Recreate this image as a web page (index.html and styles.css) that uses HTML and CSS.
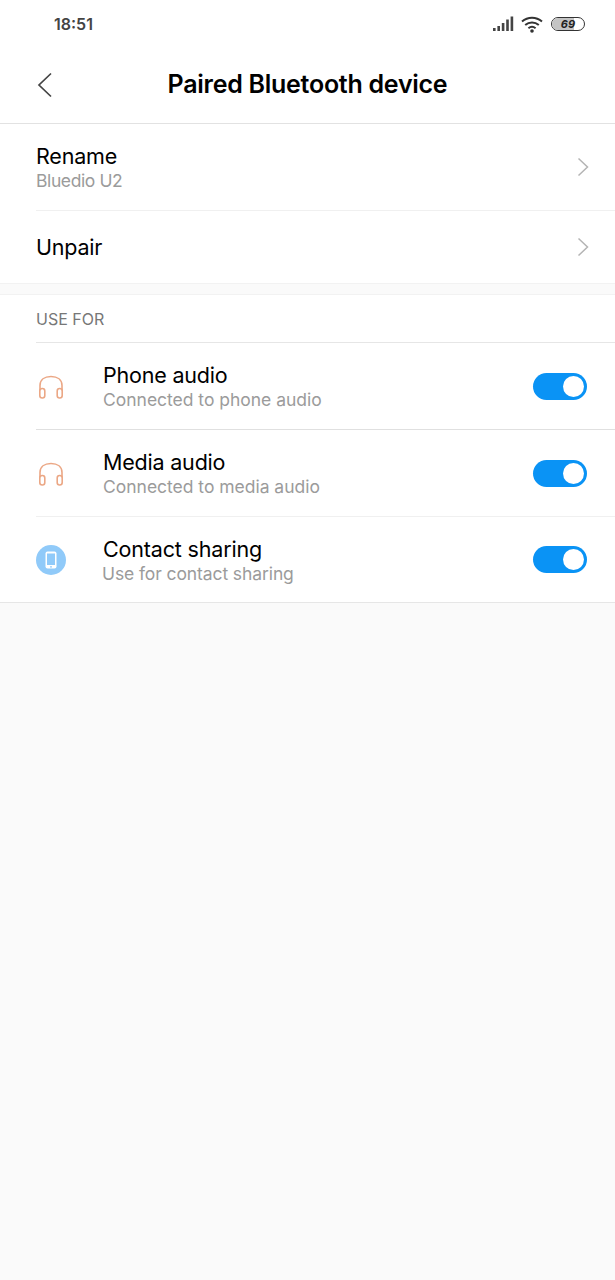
FILE: index.html
```html
<!DOCTYPE html>
<html lang="en">
<head>
<meta charset="utf-8">
<title>Paired Bluetooth device</title>
<link rel="stylesheet" href="styles.css">
</head>
<body>
<header class="top">
  <div class="status">
    <span class="time">18:51</span>
    <div class="status-icons">
      <svg class="signal" width="21" height="16" viewBox="0 0 21 16"><rect x="0" y="12" width="2.600" height="3" /><rect x="4.400" y="10" width="2.600" height="5" /><rect x="8.800" y="7" width="2.600" height="8" /><rect x="13.200" y="3.500" width="2.600" height="11.500" /><rect x="17.600" y="0.500" width="2.600" height="14.500" /></svg>
      <svg class="wifi" width="22" height="17" viewBox="0 0 22 17"><path d="M1 5.600C6.800.6 15.200.6 21 5.600M4.200 9C8.200 5.600 13.800 5.600 17.800 9M7.400 12.200C9.600 10.500 12.400 10.500 14.600 12.200" fill="none" stroke="#333" stroke-width="2"/><circle cx="11" cy="15" r="1.800" fill="#333"/></svg>
      <div class="battery"><span class="battery-fill"></span><span class="battery-num">69</span></div>
    </div>
  </div>
  <div class="navbar">
    <svg class="back" width="16" height="26" viewBox="0 0 16 26"><path d="M14 1.500 2 13l12 11.500" fill="none" stroke="#444" stroke-width="1.700"/></svg>
    <h1 class="title">Paired Bluetooth device</h1>
  </div>
</header>

<section class="group group-first">
  <div class="row row-tall">
    <div class="text text-pair">
      <div class="label">Rename</div>
      <div class="sub sub-tight">Bluedio U2</div>
    </div>
    <svg class="chev" width="12" height="20" viewBox="0 0 12 20"><path d="m1.500 1.500 9 8.500-9 8.500" fill="none" stroke="#b4b4b4" stroke-width="1.500"/></svg>
  </div>
  <div class="row row-short">
    <div class="text">
      <div class="label">Unpair</div>
    </div>
    <svg class="chev" width="12" height="20" viewBox="0 0 12 20"><path d="m1.500 1.500 9 8.500-9 8.500" fill="none" stroke="#b4b4b4" stroke-width="1.500"/></svg>
  </div>
</section>

<section class="group group-use">
  <div class="section-head">USE FOR</div>
  <div class="row row-icon">
    <svg class="ico" width="30" height="30" viewBox="0 0 30 30"><path d="M4 20v-5.500C4 8.800 8.500 5.500 15 5.500s11 3.300 11 9V20" fill="none" stroke="#eba785" stroke-width="1.600"/><rect x="3.800" y="17.500" width="5" height="9.500" rx="2.400" fill="#fff" stroke="#eba785" stroke-width="1.600"/><rect x="21.200" y="17.500" width="5" height="9.500" rx="2.400" fill="#fff" stroke="#eba785" stroke-width="1.600"/></svg>
    <div class="text text-pair">
      <div class="label">Phone audio</div>
      <div class="sub">Connected to phone audio</div>
    </div>
    <div class="switch"><span class="knob"></span></div>
  </div>
  <div class="row row-icon">
    <svg class="ico" width="30" height="30" viewBox="0 0 30 30"><path d="M4 20v-5.500C4 8.800 8.500 5.500 15 5.500s11 3.300 11 9V20" fill="none" stroke="#eba785" stroke-width="1.600"/><rect x="3.800" y="17.500" width="5" height="9.500" rx="2.400" fill="#fff" stroke="#eba785" stroke-width="1.600"/><rect x="21.200" y="17.500" width="5" height="9.500" rx="2.400" fill="#fff" stroke="#eba785" stroke-width="1.600"/></svg>
    <div class="text text-pair">
      <div class="label">Media audio</div>
      <div class="sub">Connected to media audio</div>
    </div>
    <div class="switch"><span class="knob"></span></div>
  </div>
  <div class="row row-icon row-last">
    <svg class="ico" width="30" height="30" viewBox="0 0 30 30"><circle cx="15" cy="15" r="15" fill="#90caf9"/><rect x="9.500" y="6.500" width="11" height="17" rx="2" fill="#fff"/><rect x="11" y="8.500" width="8" height="11.500" fill="#90caf9"/><circle cx="15" cy="21.800" r="0.900" fill="#90caf9"/></svg>
    <div class="text text-pair text-contact">
      <div class="label label-wide">Contact sharing</div>
      <div class="sub sub-contact">Use for contact sharing</div>
    </div>
    <div class="switch"><span class="knob"></span></div>
  </div>
</section>
</body>
</html>
```
FILE: styles.css
```css
* { box-sizing: border-box; }
html, body { margin: 0; padding: 0; }
body {
  width: 615px;
  height: 1280px;
  background: #fafafa;
  font-family: Inter, "Liberation Sans", sans-serif;
  color: #000;
  overflow: hidden;
}
.top {
  height: 124px;
  background: #fff;
  border-bottom: 1px solid #e2e2e2;
}
.status {
  height: 48px;
  padding: 0 30px 0 54px;
  display: flex;
  align-items: center;
  justify-content: space-between;
}
.time { font-size: 16px; font-weight: 600; color: #444; }
.status-icons { display: flex; align-items: center; gap: 7px; }
.signal { fill: #444; }
.battery {
  position: relative;
  width: 34px;
  height: 14px;
  margin-left: 1px;
  border: 1.500px solid #333;
  border-radius: 7px;
  display: flex;
  align-items: center;
  justify-content: center;
  overflow: hidden;
}
.battery-fill { position: absolute; left: 0; top: 0; bottom: 0; width: 70%; background: #c4c4c4; }
.battery-num { position: relative; font-size: 11px; font-weight: 700; font-style: italic; color: #222; }
.navbar {
  position: relative;
  height: 75px;
  display: flex;
  align-items: center;
  justify-content: center;
}
.back { position: absolute; left: 37px; top: 24px; }
.title { margin: 0; font-size: 25px; font-weight: 600; letter-spacing: -0.27px; line-height: 1; position: relative; top: -1px; }
.group { background: #fff; }
.group-first { height: 160px; border-bottom: 1px solid #f2f2f2; }
.group-use { margin-top: 10px; border-top: 1px solid #f2f2f2; border-bottom: 1px solid #e6e6e6; }
.row {
  display: flex;
  align-items: center;
  margin-left: 36px;
  padding-right: 28px;
}
.row-tall { height: 87px; border-bottom: 1px solid #f0f0f0; padding-right: 26px; }
.row-short { height: 72px; padding-right: 26px; }
.text { flex: 1; }
.text-pair { padding-top: 2px; }
.label { font-size: 21.500px; line-height: 26px; letter-spacing: -0.2px; }
.label-wide { letter-spacing: -0.17px; padding-left: 1px; }
.sub { font-size: 17.500px; line-height: 24px; color: #9b9b9b; letter-spacing: -0.02px; }
.sub-tight { letter-spacing: -0.4px; }
.sub-contact { letter-spacing: -0.1px; }
.section-head {
  height: 47px;
  padding-left: 36px;
  display: flex;
  align-items: center;
  font-size: 16px;
  color: #777;
}
.row-icon { height: 87px; border-top: 1px solid #e6e6e6; }
.row-icon + .row-icon { border-top-color: #e0e0e0; }
.row-icon.row-last { height: 86px; border-top-color: #f0f0f0; }
.ico { flex: none; margin-right: 37px; }
.text-contact { margin-left: -1px; }
.switch {
  width: 54px;
  height: 27px;
  border-radius: 14px;
  background: #0a93f5;
  position: relative;
  flex: none;
}
.knob {
  position: absolute;
  right: 3px;
  top: 3px;
  width: 21px;
  height: 21px;
  border-radius: 50%;
  background: #fff;
}
```
